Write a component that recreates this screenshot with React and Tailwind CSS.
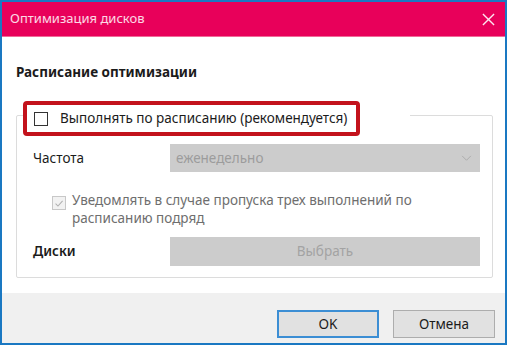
import React from "react";

function CheckIcon({ className }) {
  return (
    <svg viewBox="0 0 14 14" className={className}>
      <path d="M3 7.2 L5.8 10 L11.2 4" fill="none" stroke="currentColor" strokeWidth="1.2" />
    </svg>
  );
}

export default function App() {
  return (
    <div
      className="w-[507px] h-[345px] border-2 border-[#1a78c2] bg-white flex flex-col overflow-hidden text-[13.5px] text-[#1b1b1b]"
      style={{ fontFamily: '"Noto Sans", "Open Sans", sans-serif' }}
    >
      {/* title bar */}
      <div className="h-[35px] bg-[#e8005a] flex items-center justify-between pl-[8px] pr-[10px] border-b border-[#f06a98]">
        <span className="text-white/85 text-[13px]">Оптимизация дисков</span>
        <svg viewBox="0 0 14 14" className="w-[13px] h-[13px] text-white/90">
          <path d="M1 1 L13 13 M13 1 L1 13" stroke="currentColor" strokeWidth="1.5" />
        </svg>
      </div>

      {/* body */}
      <div className="flex-1 pl-[14px] pr-[10px] pt-[26px]">
        <div className="font-bold leading-[18px]">Расписание оптимизации</div>

        <div className="mt-[20px]">
          <div className="relative z-10 flex w-fit bg-white ml-[7px] pr-[50px]">
            <div className="flex items-center gap-[12px] h-[35px] w-[337px] pl-[7px] border-[4px] border-[#c3121c] rounded-[4px] bg-white whitespace-nowrap">
              <span className="w-[14px] h-[14px] border border-[#333] bg-white shrink-0" />
              <span>Выполнять по расписанию (рекомендуется)</span>
            </div>
          </div>

          <div className="-mt-[21px] w-[477px] h-[163px] border border-[#dcdcdc] rounded-[2px] pt-[28px] pl-[16px]">
            <div className="flex items-center">
              <span className="w-[137px]">Частота</span>
              <div className="w-[310px] h-[28px] bg-[#cccccc] flex items-center justify-between pl-[6px] pr-[8px] text-[#9c9c9c]">
                <span>еженедельно</span>
                <svg viewBox="0 0 12 8" className="w-[11px] h-[7px] text-[#a8a8a8]">
                  <path d="M1 1 L6 6 L11 1" fill="none" stroke="currentColor" strokeWidth="1" />
                </svg>
              </div>
            </div>

            <div className="flex mt-[19px] pl-[19px] text-[#6e6e6e]">
              <span className="w-[14px] h-[14px] mt-[5px] border border-[#c8c8c8] bg-[#f2f2f2] flex items-center justify-center shrink-0">
                <CheckIcon className="w-[13px] h-[13px] text-[#b0b0b0]" />
              </span>
              <div className="ml-[6px] leading-[18px] w-[360px]">
                Уведомлять в случае пропуска трех выполнений по расписанию подряд
              </div>
            </div>

            <div className="flex items-center mt-[10px]">
              <span className="w-[137px] font-semibold">Диски</span>
              <div className="w-[310px] h-[29px] bg-[#cccccc] flex items-center justify-center text-[#a3a3a3]">
                Выбрать
              </div>
            </div>
          </div>
        </div>
      </div>

      {/* footer */}
      <div className="h-[50px] bg-[#f0f0f0] flex items-start justify-end gap-[14px] pt-[17px] pr-[10px]">
        <button className="w-[102px] h-[28px] bg-[#e1e1e1] border-2 border-[#3c8ed4] text-[#1b1b1b]">OK</button>
        <button className="w-[102px] h-[28px] bg-[#e1e1e1] border border-[#adadad] text-[#1b1b1b]">Отмена</button>
      </div>
    </div>
  );
}
